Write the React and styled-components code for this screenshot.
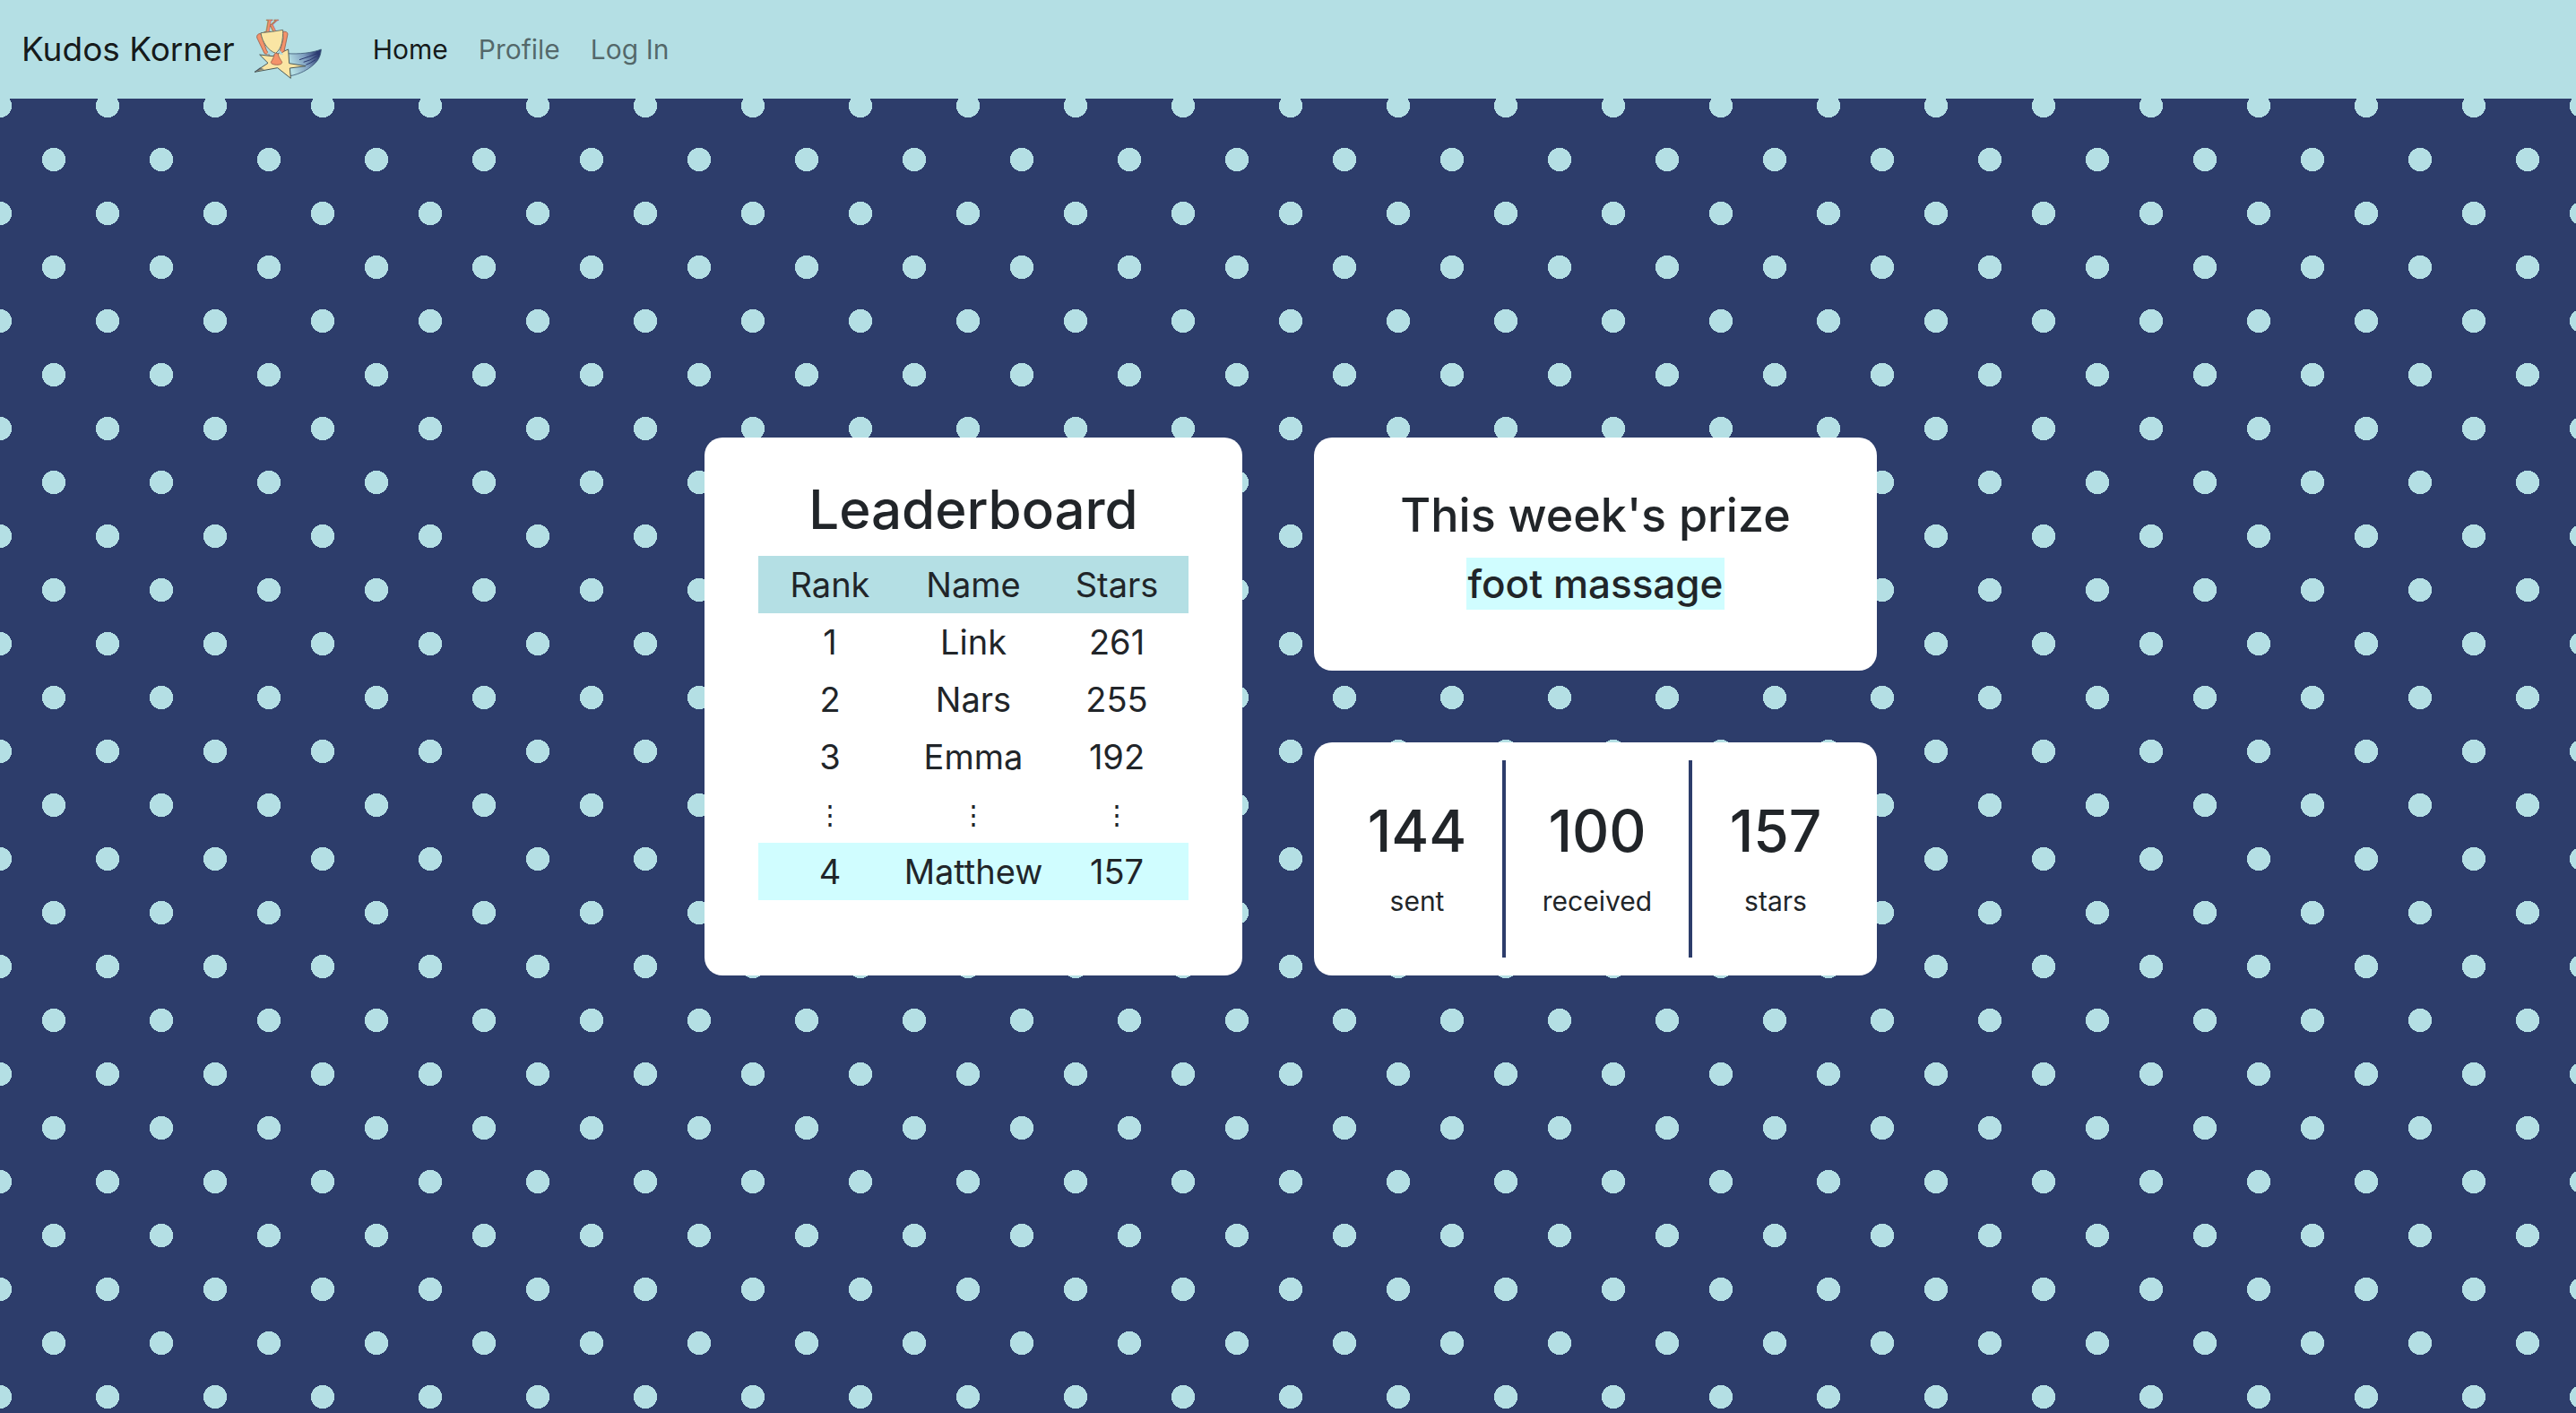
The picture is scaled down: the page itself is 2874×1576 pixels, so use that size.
import React from "react";
import styled, { createGlobalStyle, css } from "styled-components";

const color = {
  navy: "#2d3d6b",
  powder: "#b4dfe4",
  ice: "#d0fdff",
  ink: "#212529",
  sand: "#fae5a4",
  coral: "#f4926a",
};

const GlobalStyle = createGlobalStyle`
  *, *::before, *::after { box-sizing: border-box; }
  body {
    margin: 0;
    background-color: ${color.navy};
    background-image:
      radial-gradient(circle at center, ${color.powder} 13px, transparent 13px),
      radial-gradient(circle at center, ${color.powder} 13px, transparent 13px);
    background-size: 120px 120px;
    background-position: -60px -62px, 0 -2px;
    color: ${color.ink};
    font-family: Inter, "Liberation Sans", sans-serif;
    font-size: 32px;
    line-height: 48px;
  }
`;

const Page = styled.div`
  display: flex;
  flex-direction: column;
  min-height: 100vh;
`;

const Navbar = styled.header`
  display: flex;
  align-items: center;
  height: 110px;
  padding: 0 24px;
  background: ${color.powder};
`;

const Brand = styled.a`
  display: flex;
  align-items: center;
  gap: 8px;
  color: rgba(0, 0, 0, 0.9);
  font-size: 37px;
  text-decoration: none;
`;

const Logo = styled.svg`
  width: 100px;
  height: 90px;
`;

const NavList = styled.ul`
  display: flex;
  gap: 34px;
  margin: 0;
  padding: 0 0 0 46px;
  list-style: none;
`;

const NavLink = styled.a`
  color: ${(p) => (p.$active ? "rgba(0, 0, 0, 0.9)" : "rgba(0, 0, 0, 0.55)")};
  font-size: 30px;
  text-decoration: none;
`;

const Main = styled.main`
  flex: 1;
  display: flex;
  align-items: center;
  justify-content: center;
  gap: 80px;
  padding: 0 0 110px 6px;
`;

const Column = styled.div`
  display: grid;
  grid-auto-rows: 260px;
  gap: 80px;
  width: 628px;
`;

const card = css`
  background: #fff;
  border-radius: 20px;
  text-align: center;
`;

const BoardCard = styled.section`
  ${card}
  width: 600px;
  height: 600px;
  padding: 40px 60px;
`;

const PrizeCard = styled.section`
  ${card}
  display: flex;
  flex-direction: column;
  align-items: center;
  justify-content: center;
`;

const StatsCard = styled.section`
  ${card}
  display: grid;
  grid-template-columns: 194fr 208fr 186fr;
  padding: 20px;
`;

const BoardTitle = styled.h1`
  margin: 0 0 12px;
  font-size: 60px;
  font-weight: 500;
  line-height: 80px;
`;

const Table = styled.table`
  width: 100%;
  table-layout: fixed;
  border-collapse: collapse;
  font-size: 38px;
`;

const Row = styled.tr`
  height: 64px;
  background: ${(p) => p.$fill || "transparent"};
`;

const HeadCell = styled.th`
  padding: 0;
  font-weight: 400;
`;

const Cell = styled.td`
  padding: 0;
  font-size: ${(p) => (p.$gap ? "30px" : "inherit")};
`;

const PrizeTitle = styled.h2`
  margin: 0 0 12px;
  font-size: 52px;
  font-weight: 500;
  line-height: 70px;
`;

const PrizeName = styled.h3`
  margin: 0 0 16px;
  font-size: 44px;
  font-weight: 500;
  line-height: 58px;
`;

const Highlight = styled.mark`
  padding: 2px;
  background: ${color.ice};
  color: inherit;
`;

const Stat = styled.div`
  display: flex;
  flex-direction: column;
  align-items: center;
  justify-content: center;
  gap: 16px;
  border-right: ${(p) => (p.$last ? "none" : `4px solid ${color.navy}`)};
`;

const StatValue = styled.strong`
  font-size: 64px;
  font-weight: 500;
  line-height: 77px;
`;

const StatLabel = styled.span`
  font-size: 30px;
`;

const links = [
  { label: "Home", active: true },
  { label: "Profile" },
  { label: "Log In" },
];

const rows = [
  ["1", "Link", "261"],
  ["2", "Nars", "255"],
  ["3", "Emma", "192"],
  ["⋮", "⋮", "⋮"],
  ["4", "Matthew", "157"],
];

const stats = [
  { value: 144, label: "sent" },
  { value: 100, label: "received" },
  { value: 157, label: "stars" },
];

function TrophyLogo() {
  return (
    <Logo viewBox="0 0 300 270" aria-hidden="true">
      <defs>
        <linearGradient id="tail" x1="0" x2="1" y1="0.6" y2="0.3">
          <stop offset="0.1" stopColor={color.powder} />
          <stop offset="0.55" stopColor="#7f9fc0" />
          <stop offset="0.95" stopColor="#2b3a70" />
        </linearGradient>
      </defs>
      <path
        d="M150 149 C190 152 235 147 265 135 C264 155 256 173 240 186 C220 204 195 217 162 224 Z"
        fill="url(#tail)"
        stroke="#3f5c78"
        strokeWidth="2.5"
      />
      <path
        d="M254 148 Q225 160 192 170 M250 158 Q225 174 206 178 M246 170 Q228 182 214 187"
        fill="none"
        stroke="#2b3a70"
        strokeWidth="3"
      />
      <path
        d="M59 153 L102 158 L155 135 L158 182 L213 191 L160 198 L163 232 L119 197 L42 211 L87 181 Z"
        fill={color.sand}
        stroke="#4c5a58"
        strokeWidth="3"
        strokeLinejoin="round"
      />
      <path d="M42 211 L60 196 L75 202 Z" fill="#37445c" opacity="0.6" />
      <path
        d="M62 82 Q48 84 50 96 L75 149 L92 154 L82 138 L70 104 Z M137 76 Q152 74 153 84 L141 142 L126 150 L128 138 L138 100 Z"
        fill={color.coral}
        stroke="#985f4c"
        strokeWidth="2.5"
      />
      <path d="M82 152 L104 150 L106 138 L92 139 Z M124 150 L138 154 L128 138 Z" fill="#a9d9e2" />
      <text
        x="76"
        y="79"
        fontFamily="Liberation Serif, serif"
        fontSize="64"
        fontWeight="700"
        fontStyle="italic"
        fill={color.coral}
        stroke="#985f4c"
        strokeWidth="2"
      >
        K
      </text>
      <path
        d="M63 80 Q100 77 137 70 C137 105 133 132 113 148 C88 140 68 112 63 80 Z"
        fill={color.sand}
        stroke="#6d7468"
        strokeWidth="3"
      />
      <path
        d="M113 148 L121 150 C122 162 130 170 134 178 Q134 187 116 187 Q97 186 97 178 C102 170 107 160 109 150 Z"
        fill={color.coral}
        stroke="#985f4c"
        strokeWidth="2.5"
      />
    </Logo>
  );
}

export default function App() {
  return (
    <>
      <GlobalStyle />
      <Page>
        <Navbar>
          <Brand href="#home">
            Kudos Korner
            <TrophyLogo />
          </Brand>
          <nav>
            <NavList>
              {links.map((link) => (
                <li key={link.label}>
                  <NavLink href="#" $active={link.active}>
                    {link.label}
                  </NavLink>
                </li>
              ))}
            </NavList>
          </nav>
        </Navbar>
        <Main>
          <BoardCard>
            <BoardTitle>Leaderboard</BoardTitle>
            <Table>
              <thead>
                <Row $fill={color.powder}>
                  <HeadCell scope="col">Rank</HeadCell>
                  <HeadCell scope="col">Name</HeadCell>
                  <HeadCell scope="col">Stars</HeadCell>
                </Row>
              </thead>
              <tbody>
                {rows.map((cells, i) => (
                  <Row key={i} $fill={i === rows.length - 1 ? color.ice : undefined}>
                    {cells.map((text, j) => (
                      <Cell key={j} $gap={text === "⋮"}>
                        {text}
                      </Cell>
                    ))}
                  </Row>
                ))}
              </tbody>
            </Table>
          </BoardCard>
          <Column>
            <PrizeCard>
              <PrizeTitle>This week's prize</PrizeTitle>
              <PrizeName>
                <Highlight>foot massage</Highlight>
              </PrizeName>
            </PrizeCard>
            <StatsCard>
              {stats.map((stat, i) => (
                <Stat key={stat.label} $last={i === stats.length - 1}>
                  <StatValue>{stat.value}</StatValue>
                  <StatLabel>{stat.label}</StatLabel>
                </Stat>
              ))}
            </StatsCard>
          </Column>
        </Main>
      </Page>
    </>
  );
}
